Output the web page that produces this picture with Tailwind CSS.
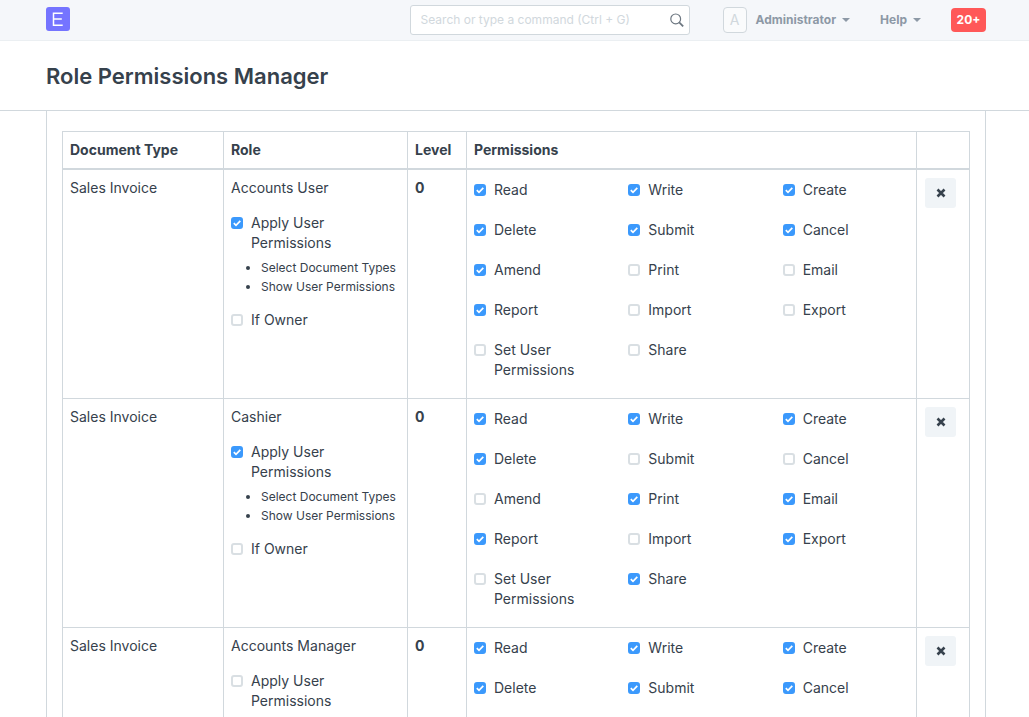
<!DOCTYPE html>
<html lang="en">
<head>
<meta charset="utf-8">
<meta name="viewport" content="width=device-width, initial-scale=1">
<title>Role Permissions Manager</title>
<script src="https://cdn.jsdelivr.net/npm/@tailwindcss/browser@4"></script>
</head>
<body class="bg-white font-['Inter',sans-serif] text-sm leading-5 text-[#36414c]">

<nav class="flex h-[41px] items-center border-b border-[#ebeff2] bg-[#f5f7fa] pr-[43px] pl-[46px] text-xs">
  <a href="#" aria-label="Home" class="mb-[2px] block size-6">
    <svg viewBox="0 0 24 24" class="size-6"><rect width="24" height="24" rx="3" fill="#7574ff"/><path d="M16.700 6.300H7.500V18.200h9.200M7.500 12h8.300" fill="none" stroke="#fff" stroke-width="1.500"/></svg>
  </a>
  <form class="ml-auto flex h-[30px] w-[280px] items-center rounded-[3px] border border-[#d1d8dd] bg-white pr-[5px] pl-[10px]">
    <input type="text" aria-label="Search" placeholder="Search or type a command (Ctrl + G)" class="min-w-0 flex-1 bg-transparent text-xs outline-none placeholder:text-[#d1d8dd]">
    <button type="button" aria-label="Run search" class="size-[14px]">
      <svg viewBox="0 0 14 14" class="size-[14px]" fill="none" stroke="#6c7680"><circle cx="5.700" cy="5.900" r="4.900" stroke-width="1.200"/><path d="M9.200 9.400l4 4" stroke-width="1.800"/></svg>
    </button>
  </form>
  <button type="button" class="ml-[33px] flex items-center font-bold text-[#8d99a6]">
    <span class="mr-[9px] flex h-[26px] w-6 items-center justify-center rounded-[4px] border border-[#d1d8dd] bg-[#fafbfc] text-sm font-normal text-[#d1d8dd]">A</span>
    Administrator
    <svg viewBox="0 0 8 4" class="ml-[6px] h-1 w-2" fill="currentColor"><path d="M0 0h8L4 4z"/></svg>
  </button>
  <button type="button" class="ml-[30px] flex items-center font-bold text-[#8d99a6]">
    Help
    <svg viewBox="0 0 8 4" class="ml-[6px] h-1 w-2" fill="currentColor"><path d="M0 0h8L4 4z"/></svg>
  </button>
  <button type="button" class="ml-[30px] h-6 w-[35px] rounded-[4px] bg-[#ff5858] font-bold text-white">20+</button>
</nav>

<header class="border-b border-[#d1d8dd] pt-[19px] pr-[43px] pb-[18px] pl-[46px]">
  <h1 class="text-[22px] leading-8 font-semibold">Role Permissions Manager</h1>
</header>

<main class="pr-[43px] pl-[46px]">
  <div class="border-x border-[#d1d8dd] px-[15px] py-5">
    <table class="w-full table-fixed border-collapse">
      <colgroup><col class="w-[161px]"><col class="w-[184px]"><col class="w-[59px]"><col><col class="w-[53px]"></colgroup>
      <thead>
        <tr class="text-left">
          <th scope="col" class="border border-b-2 border-[#d1d8dd] py-2 pl-[7px] font-bold">Document Type</th>
          <th scope="col" class="border border-b-2 border-[#d1d8dd] py-2 pl-[7px] font-bold">Role</th>
          <th scope="col" class="border border-b-2 border-[#d1d8dd] py-2 pl-[7px] font-bold">Level</th>
          <th scope="col" class="border border-b-2 border-[#d1d8dd] py-2 pl-[7px] font-bold">Permissions</th>
          <td class="border border-b-2 border-[#d1d8dd] p-2"></td>
        </tr>
      </thead>
      <tbody id="rules"></tbody>
    </table>
  </div>
</main>

<script>
const rights = ["Read", "Write", "Create", "Delete", "Submit", "Cancel", "Amend", "Print", "Email", "Report", "Import", "Export", "Set User Permissions", "Share"];
const rules = [
  { role: "Accounts User", apply: true, on: ["Read", "Write", "Create", "Delete", "Submit", "Cancel", "Amend", "Report"] },
  { role: "Cashier", apply: true, on: ["Read", "Write", "Create", "Delete", "Print", "Email", "Report", "Export", "Share"] },
  { role: "Accounts Manager", apply: false, on: ["Read", "Write", "Create", "Delete", "Submit", "Cancel", "Amend", "Report"] },
];

const check = (text, on) => `
  <label class="flex gap-2">
    <span class="mt-1 grid size-3 shrink-0">
      <input type="checkbox" ${on ? "checked" : ""} class="peer col-start-1 row-start-1 size-3 appearance-none rounded-[3px] border-2 border-[#d9dfe3] bg-white checked:border-[#3b99fc] checked:bg-[#3b99fc]">
      <svg viewBox="0 0 12 12" class="pointer-events-none col-start-1 row-start-1 hidden size-3 peer-checked:block" fill="none" stroke="#fff" stroke-width="1.700"><path d="M2.800 6.200l2.200 2.200 4.300-4.600"/></svg>
    </span>
    <span>${text}</span>
  </label>`;

document.getElementById("rules").innerHTML = rules.map(r => `
  <tr class="align-top">
    <td class="border border-[#d1d8dd] py-2 pl-[7px]">Sales Invoice</td>
    <td class="border border-[#d1d8dd] py-2 pl-[7px]">
      <div class="mb-[15px]">${r.role}</div>
      <div class="pr-[38px]">${check("Apply User Permissions", r.apply)}</div>
      <ul class="mt-[5px] mb-[14px] list-disc pl-[30px] text-xs leading-[19px] whitespace-nowrap">
        <li><a href="#">Select Document Types</a></li>
        <li><a href="#">Show User Permissions</a></li>
      </ul>
      ${check("If Owner", false)}
    </td>
    <td class="border border-[#d1d8dd] py-2 pl-[7px] font-bold">0</td>
    <td class="border border-[#d1d8dd] py-2 pr-2 pl-[7px]">
      <div class="-mr-[29px] grid grid-cols-3 gap-y-5 pt-[2px] pb-[10px]">
        ${rights.map(n => `<div class="pr-[30px]">${check(n, r.on.includes(n))}</div>`).join("")}
      </div>
    </td>
    <td class="border border-[#d1d8dd] p-2">
      <button type="button" aria-label="Delete rule" class="flex h-[30px] w-[31px] items-center justify-center rounded-[3px] bg-[#f0f4f7]">
        <svg viewBox="0 0 10 10" class="size-[10px]" stroke="#36414c" stroke-width="2.600"><path d="M1.500 1.500l7 7M8.500 1.500l-7 7"/></svg>
      </button>
    </td>
  </tr>`).join("");
</script>
</body>
</html>
